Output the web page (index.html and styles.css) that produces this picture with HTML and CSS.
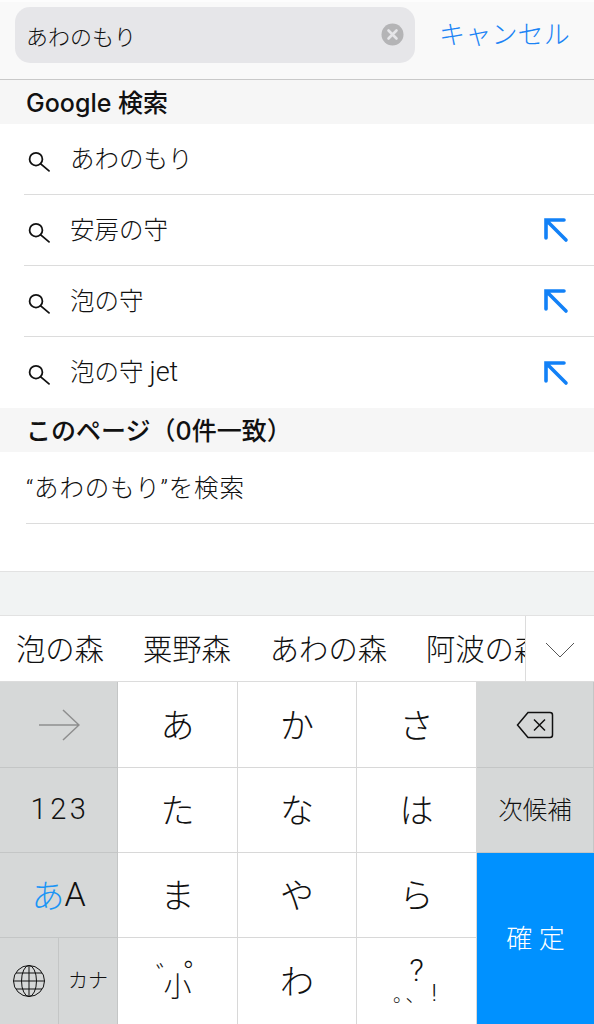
FILE: index.html
```html
<!DOCTYPE html>
<html lang="ja">
<head>
<meta charset="UTF-8" />
<meta name="viewport" content="width=device-width, initial-scale=1" />
<title>Search</title>
<link rel="stylesheet" href="styles.css">
</head>
<body>

<header class="search-bar">
  <div class="search-field">
    <span class="search-text">あわのもり</span>
    <svg class="clear-icon" width="23" height="23" viewBox="0 0 23 23">
      <circle cx="11.5" cy="11.5" r="11" fill="#b4b4b6" />
      <path d="M7.5 7.5l8 8M15.5 7.5l-8 8" stroke="#e6e6e9" stroke-width="2.6" stroke-linecap="round" />
    </svg>
  </div>
  <span class="cancel">キャンセル</span>
</header>

<main>
  <h2 class="section-title">Google 検索</h2>
  <ul class="suggestions">
    <li class="suggestion">
      <svg class="search-icon" width="22" height="22" viewBox="0 0 22 22"><circle cx="8" cy="9.2" r="6.4" /><path d="M12.700 13.900l8.300 7" /></svg>
      <span class="suggestion-text">あわのもり</span>
    </li>
    <li class="suggestion">
      <svg class="search-icon" width="22" height="22" viewBox="0 0 22 22"><circle cx="8" cy="9.2" r="6.4" /><path d="M12.700 13.900l8.300 7" /></svg>
      <span class="suggestion-text">安房の守</span>
      <svg class="fill-icon" width="26" height="26" viewBox="0 0 26 26"><path d="M3 21V3h18M3.500 3.500L23 23" /></svg>
    </li>
    <li class="suggestion">
      <svg class="search-icon" width="22" height="22" viewBox="0 0 22 22"><circle cx="8" cy="9.2" r="6.4" /><path d="M12.700 13.900l8.300 7" /></svg>
      <span class="suggestion-text">泡の守</span>
      <svg class="fill-icon" width="26" height="26" viewBox="0 0 26 26"><path d="M3 21V3h18M3.500 3.500L23 23" /></svg>
    </li>
    <li class="suggestion last">
      <svg class="search-icon" width="22" height="22" viewBox="0 0 22 22"><circle cx="8" cy="9.2" r="6.4" /><path d="M12.700 13.900l8.300 7" /></svg>
      <span class="suggestion-text">泡の守 <span class="latin">jet</span></span>
      <svg class="fill-icon" width="26" height="26" viewBox="0 0 26 26"><path d="M3 21V3h18M3.500 3.500L23 23" /></svg>
    </li>
  </ul>
  <h2 class="section-title">このページ（0件一致）</h2>
  <div class="page-search">“あわのもり”を検索</div>
  <div class="blank"></div>
  <div class="gap"></div>
</main>

<div class="candidates">
  <div class="candidate-list">
    <span>泡の森</span>
    <span>粟野森</span>
    <span>あわの森</span>
    <span class="clipped">阿波の森</span>
  </div>
  <div class="candidate-more">
    <svg width="32" height="18" viewBox="0 0 32 18"><path d="M2 2l14 14L30 2" /></svg>
  </div>
</div>

<div class="keyboard">
  <div class="key func arrow">
    <svg width="42" height="34" viewBox="0 0 42 34"><path d="M1 17h40M25 2l16 15-16 15" /></svg>
  </div>
  <div class="key">あ</div>
  <div class="key">か</div>
  <div class="key">さ</div>
  <div class="key func delete">
    <svg width="38" height="28" viewBox="0 0 38 28"><path d="M12 1.500h22a2.500 2.500 0 0 1 2.500 2.500v20a2.500 2.500 0 0 1-2.500 2.500H12L1.500 14z" /><path d="M18 8.500l11 11M29 8.500l-11 11" /></svg>
  </div>

  <div class="key func numbers">123</div>
  <div class="key">た</div>
  <div class="key">な</div>
  <div class="key">は</div>
  <div class="key func next">次候補</div>

  <div class="key func mode"><span class="mode-on">あ</span>A</div>
  <div class="key">ま</div>
  <div class="key">や</div>
  <div class="key">ら</div>
  <div class="key confirm">確 定</div>

  <div class="split">
    <div class="key func globe">
      <svg width="34" height="34" viewBox="0 0 34 34">
        <circle cx="17" cy="17" r="15.500" />
        <ellipse cx="17" cy="17" rx="7.500" ry="15.500" />
        <path d="M17 1.500v31M1.500 17h31M4 9h26M4 25h26" />
      </svg>
    </div>
    <div class="key func kana">カナ</div>
  </div>
  <div class="key small-kana">
    <span class="dakuten">゛</span><span class="small-tsu">小</span><span class="handakuten">゜</span>
  </div>
  <div class="key">わ</div>
  <div class="key punctuation">
    <span class="question">?</span>
    <span class="marks">。、<span class="bang">!</span></span>
  </div>
</div>

</body>
</html>
```

FILE: styles.css
```css
* {
  box-sizing: border-box;
}
body {
  margin: 0;
  width: 594px;
  height: 1024px;
  overflow: hidden;
  background: white;
  color: #111;
  font-family: Roboto, "Noto Sans CJK JP", sans-serif;
  font-weight: 300;
}

/* Search bar */
.search-bar {
  height: 80px;
  padding: 7px 24px 0 15px;
  display: flex;
  justify-content: space-between;
  background: #f9f9f9;
  border-top: 2px solid #fdfdfd;
  border-bottom: 1px solid #c9c9c9;
}
.search-field {
  width: 400px;
  height: 56px;
  margin-top: -2px;
  padding: 0 11px 1px 12px;
  display: flex;
  align-items: center;
  justify-content: space-between;
  background: #e6e6e9;
  border-radius: 15px;
}
.search-text {
  font-size: 22px;
  margin-left: -1px;
}
.cancel {
  margin-top: 2px;
  color: #1b84f5;
  font-size: 26px;
  line-height: 48px;
  letter-spacing: 0.2px;
}

/* Results */
.section-title {
  margin: 0;
  height: 44px;
  padding-left: 26px;
  background: #f6f6f6;
  font-family: Inter, "Noto Sans CJK JP", sans-serif;
  font-size: 25px;
  font-weight: 500;
  line-height: 47px;
}
.suggestions {
  margin: 0;
  padding: 0;
  list-style: none;
}
.suggestion {
  height: 71px;
  margin-left: 24px;
  padding-right: 25px;
  display: flex;
  align-items: center;
  border-bottom: 1px solid #dcdcdc;
}
.suggestion.last {
  border-bottom: none;
}
.search-icon {
  margin: 3px 20px 0 4px;
  flex: none;
  fill: none;
  stroke: #111;
  stroke-width: 1.8;
  stroke-linecap: round;
}
.suggestion-text {
  flex: 1;
  margin-top: -4px;
  font-size: 24.5px;
}
.latin {
  font-size: 27px;
}
.fill-icon {
  flex: none;
  fill: none;
  stroke: #1281f7;
  stroke-width: 3.6;
  stroke-linecap: round;
}
.page-search {
  height: 72px;
  margin-left: 26px;
  padding-top: 17px;
  border-bottom: 1px solid #dcdcdc;
  font-size: 24.5px;
  letter-spacing: 0.8px;
  line-height: 40px;
}
.blank {
  height: 48px;
  border-bottom: 1px solid #e2e2e2;
}
.gap {
  height: 44px;
  background: #f1f3f3;
  border-bottom: 1px solid #e2e2e2;
}

/* Candidates */
.candidates {
  height: 66px;
  display: flex;
  background: white;
  border-bottom: 1px solid #dcdcdc;
}
.candidate-list {
  width: 525px;
  padding-left: 16px;
  display: flex;
  gap: 39px;
  overflow: hidden;
  white-space: nowrap;
  font-size: 29.3px;
  line-height: 68px;
}
.candidate-list span {
  flex: none;
}
.candidate-list .clipped {
  flex: 0 1 auto;
  min-width: 0;
  overflow: hidden;
}
.candidate-more {
  flex: 1;
  padding: 2px 1px 0 0;
  display: flex;
  align-items: center;
  justify-content: center;
  border-left: 1px solid #dcdcdc;
}
.candidate-more svg {
  fill: none;
  stroke: #555;
  stroke-width: 1;
}

/* Keyboard */
.keyboard {
  height: 343px;
  display: grid;
  grid-template-columns: 118px 120px 119px 120px 117px;
  grid-template-rows: 86px 85px 85px 87px;
}
.key {
  display: flex;
  align-items: center;
  justify-content: center;
  padding-bottom: 3px;
  background: white;
  border-right: 1px solid #d8d8d8;
  border-bottom: 1px solid #d8d8d8;
  font-size: 34px;
}
.key.func {
  background: #d6d8d8;
  border-color: #c4c6c6;
  font-size: 29px;
}
.arrow svg {
  margin-top: 3px;
  fill: none;
  stroke: #8e8e8e;
  stroke-width: 1.500;
}
.delete svg {
  margin-top: 3px;
  fill: none;
  stroke: #111;
  stroke-width: 1.500;
}
.key.numbers {
  padding: 0 0 2px 3px;
  letter-spacing: 3.500px;
}
.key.next {
  font-size: 24.500px;
}
.key.mode {
  font-size: 34px;
  padding-bottom: 2px;
}
.mode-on {
  color: #1b95f5;
  font-size: 33px;
}
.confirm {
  grid-column: 5;
  grid-row: 3 / span 2;
  padding-bottom: 6px;
  background: #0091ff;
  color: white;
  border: none;
  font-size: 26px;
}
.split {
  display: grid;
  grid-template-columns: 59px 59px;
}
.key.globe {
  padding-bottom: 0;
}
.globe svg {
  fill: none;
  stroke: #111;
  stroke-width: 1;
}
.key.kana {
  font-size: 20px;
}
.small-kana {
  position: relative;
}
.small-tsu {
  font-size: 28px;
  margin-top: 10px;
}
.dakuten {
  position: absolute;
  left: 38px;
  top: 17px;
  font-size: 26px;
}
.handakuten {
  position: absolute;
  left: 66px;
  top: 12px;
  font-size: 32px;
}
.punctuation {
  flex-direction: column;
  padding: 0;
  line-height: 1;
}
.question {
  margin-top: -3px;
  font-size: 32px;
}
.marks {
  display: flex;
  align-items: flex-end;
  margin-top: -5px;
  font-size: 19px;
  letter-spacing: 3px;
}
.bang {
  margin-left: 4px;
  font-size: 24px;
}
```
